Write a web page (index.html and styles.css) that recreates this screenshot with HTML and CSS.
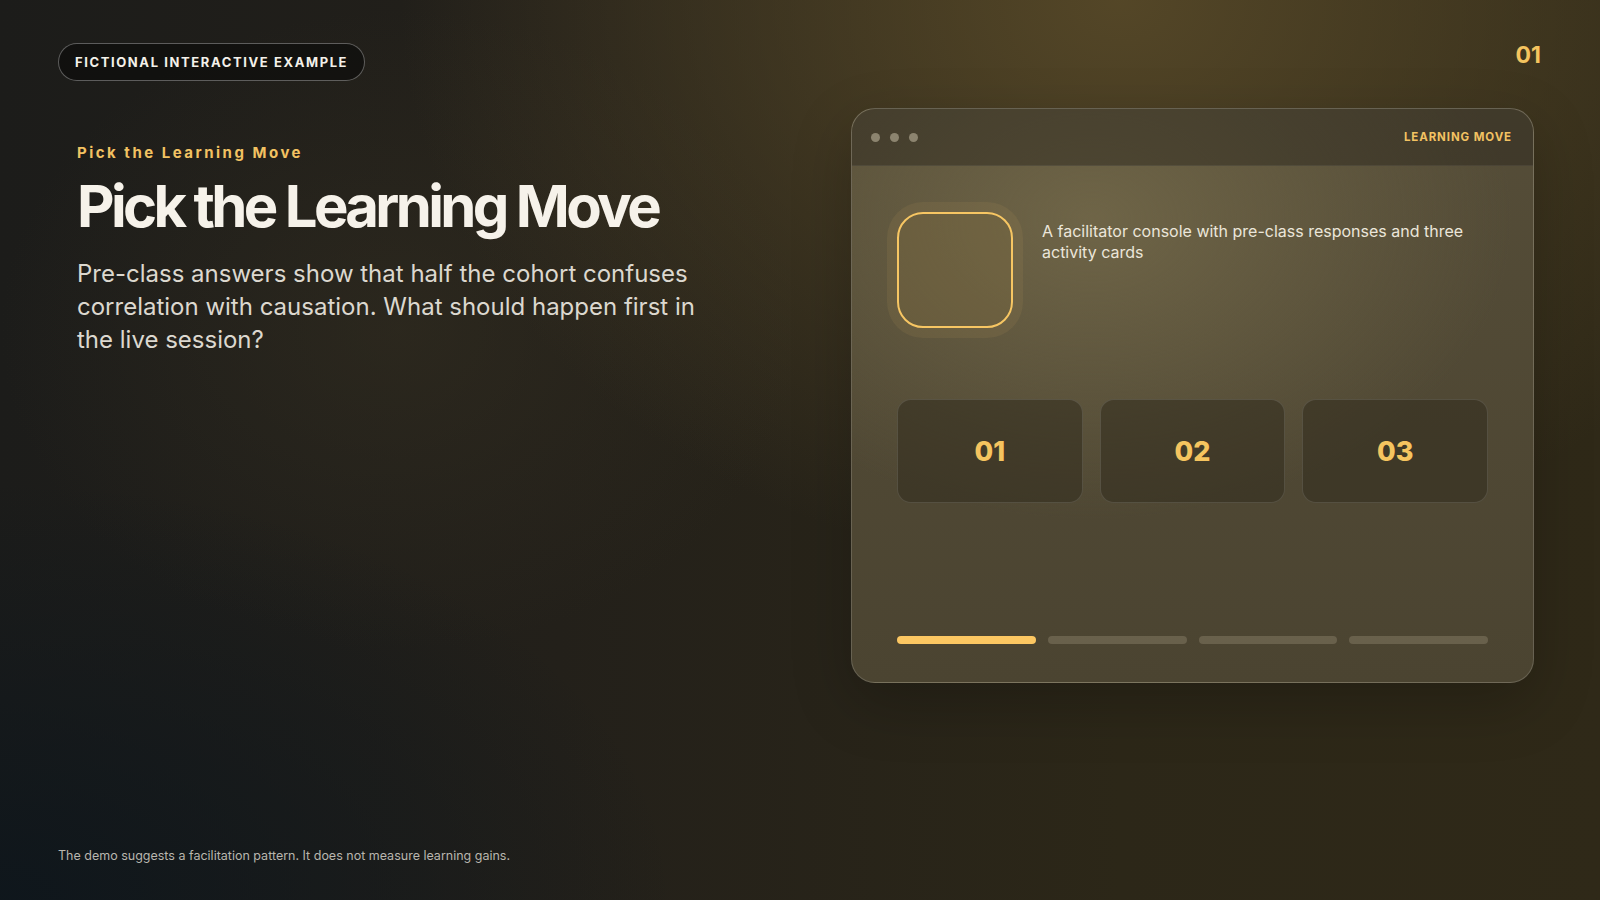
FILE: index.html
```html
<!DOCTYPE html>
<html lang="en">
<head>
<meta charset="utf-8">
<title>Pick the Learning Move</title>
<link rel="stylesheet" href="styles.css">
</head>
<body>
<div class="slide">
  <header class="topbar">
    <span class="pill">Fictional interactive example</span>
    <span class="page-num">01</span>
  </header>
  <main class="content">
    <section class="intro">
      <p class="eyebrow">Pick the Learning Move</p>
      <h1 class="title">Pick the Learning Move</h1>
      <p class="lead">Pre-class answers show that half the cohort confuses correlation with causation. What should happen first in the live session?</p>
    </section>
    <section class="panel">
      <div class="panel-head">
        <div class="dots"><span class="dot"></span><span class="dot"></span><span class="dot"></span></div>
        <span class="panel-label">Learning move</span>
      </div>
      <div class="panel-body">
        <div class="summary">
          <div class="icon-box"></div>
          <p class="summary-text">A facilitator console with pre-class responses and three activity cards</p>
        </div>
        <div class="cards">
          <div class="card">01</div>
          <div class="card">02</div>
          <div class="card">03</div>
        </div>
        <div class="progress">
          <span class="bar active"></span>
          <span class="bar"></span>
          <span class="bar"></span>
          <span class="bar"></span>
        </div>
      </div>
    </section>
  </main>
  <footer class="footnote">The demo suggests a facilitation pattern. It does not measure learning gains.</footer>
</div>
</body>
</html>
```

FILE: styles.css
```css
* { box-sizing: border-box; }

html, body {
  margin: 0;
  padding: 0;
}

body {
  width: 1600px;
  height: 900px;
  overflow: hidden;
  font-family: Inter, "Noto Sans", "Liberation Sans", sans-serif;
  color: #f3efe6;
  background:
    radial-gradient(ellipse 900px 720px at 1120px 0px, rgba(86, 72, 40, 0.95), rgba(86, 72, 40, 0) 80%),
    radial-gradient(ellipse 900px 560px at 0px 900px, rgba(14, 22, 28, 0.95), rgba(14, 22, 28, 0) 75%),
    radial-gradient(ellipse 500px 400px at 400px 330px, rgba(56, 50, 34, 0.45), rgba(56, 50, 34, 0) 80%),
    linear-gradient(90deg, #1c1c1a 0%, #23201a 35%, #2c2718 70%, #2f2918 100%);
}

.slide {
  width: 1600px;
  height: 900px;
  padding: 43px 59px 36px 58px;
  display: flex;
  flex-direction: column;
}

.topbar {
  display: flex;
  justify-content: space-between;
  align-items: flex-start;
  height: 38px;
}

.pill {
  display: inline-flex;
  align-items: center;
  height: 38px;
  padding: 0 16px 0 16px;
  border: 1px solid rgba(255, 255, 255, 0.32);
  border-radius: 999px;
  background: rgba(8, 8, 8, 0.55);
  font-size: 13px;
  font-weight: 700;
  letter-spacing: 1.6px;
  text-transform: uppercase;
  color: #f4f1ea;
}

.page-num {
  font-size: 23px;
  line-height: 24px;
  font-weight: 700;
  color: #f5c45f;
}

.content {
  margin-top: 27px;
  display: flex;
  justify-content: space-between;
  align-items: flex-start;
}

.intro {
  width: 680px;
  padding-left: 19px;
  padding-top: 35px;
}

.eyebrow {
  margin: 0;
  font-size: 15px;
  line-height: 20px;
  font-weight: 700;
  letter-spacing: 2.5px;
  color: #f2c262;
}

.title {
  margin: 13px 0 0 0;
  font-size: 58px;
  line-height: 61px;
  font-weight: 700;
  letter-spacing: -3.65px;
  color: #f6f2ea;
}

.lead {
  margin: 20px 0 0 0;
  width: 640px;
  font-size: 24px;
  line-height: 33px;
  font-weight: 400;
  color: #dcd8cf;
}

.panel {
  width: 683px;
  height: 575px;
  margin-right: 7px;
  border-radius: 24px;
  border: 1px solid rgba(255, 255, 255, 0.16);
  overflow: hidden;
  display: flex;
  flex-direction: column;
  background:
    radial-gradient(ellipse 420px 300px at 240px 110px, rgba(112, 102, 72, 0.95), rgba(112, 102, 72, 0) 100%),
    linear-gradient(180deg, #554d38 0%, #4b4431 100%);
  box-shadow: 0 20px 60px rgba(0, 0, 0, 0.22);
}

.panel-head {
  height: 57px;
  flex: none;
  display: flex;
  align-items: center;
  justify-content: space-between;
  padding: 0 21px 0 19px;
  background: rgba(40, 36, 26, 0.45);
  border-bottom: 1px solid rgba(255, 255, 255, 0.06);
}

.dots {
  display: flex;
  gap: 10px;
}

.dot {
  width: 9px;
  height: 9px;
  border-radius: 50%;
  background: #8c846f;
}

.panel-label {
  font-size: 11.5px;
  font-weight: 700;
  letter-spacing: 0.9px;
  text-transform: uppercase;
  color: #f2c262;
}

.panel-body {
  flex: 1;
  display: flex;
  flex-direction: column;
  padding: 46px 45px 38px 45px;
}

.summary {
  display: flex;
  align-items: flex-start;
  gap: 29px;
}

.icon-box {
  flex: none;
  width: 116px;
  height: 116px;
  border: 2px solid #f7c663;
  border-radius: 26px;
  background: rgba(130, 108, 62, 0.3);
  box-shadow: 0 0 0 10px rgba(205, 170, 95, 0.1);
}

.summary-text {
  margin: 9px 0 0 0;
  font-size: 16px;
  line-height: 21px;
  color: #ebe6da;
}

.cards {
  margin-top: 71px;
  display: grid;
  grid-template-columns: repeat(3, 1fr);
  gap: 17px;
}

.card {
  height: 104px;
  display: flex;
  align-items: center;
  justify-content: center;
  border-radius: 14px;
  border: 1px solid rgba(255, 255, 255, 0.12);
  background: rgba(50, 44, 30, 0.55);
  font-size: 27px;
  font-weight: 800;
  color: #f5c45f;
}

.progress {
  margin-top: auto;
  display: grid;
  grid-template-columns: repeat(4, 1fr);
  gap: 12px;
}

.bar {
  height: 8px;
  border-radius: 4px;
  background: rgba(160, 150, 125, 0.35);
}

.bar.active {
  background: #fcc762;
}

.footnote {
  margin-top: auto;
  font-size: 12.5px;
  line-height: 16px;
  color: #b9b6ae;
}
```
